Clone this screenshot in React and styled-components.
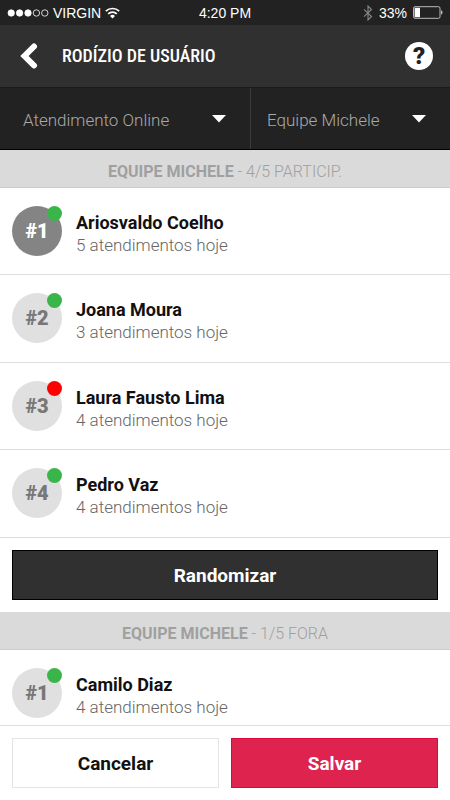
import React, { useState } from 'react';
import styled, { createGlobalStyle } from 'styled-components';


const GlobalStyle = createGlobalStyle`
    * {
        box-sizing: border-box;
    }

    body {
        margin: 0;
        background: #fff;
        font-family: Roboto, "Liberation Sans", sans-serif;
    }

    button, select {
        font-family: inherit;
    }
`;

const Screen = styled.div`
    display: flex;
    flex-direction: column;
    height: 100vh;
`;

const StatusBar = styled.div`
    display: grid;
    grid-template-columns: 1fr auto 1fr;
    align-items: center;
    height: 25px;
    padding: 0 7px;
    background: #222;
    color: #fff;
    font: 14px/24px "Liberation Sans", Arial, sans-serif;
`;

const StatusGroup = styled.div`
    display: flex;
    align-items: center;
    justify-content: ${props => props.$end ? 'flex-end' : 'flex-start'};
    gap: ${props => props.$end ? '6px' : '4px'};
`;

const Header = styled.header`
    display: flex;
    align-items: center;
    gap: 20px;
    height: 63px;
    padding: 0 17px 0 16px;
    background: #303030;
    border-bottom: 1px solid #1a1a1a;
`;

const BackButton = styled.button`
    display: flex;
    padding: 4px;
    border: 0;
    background: none;
`;

const Title = styled.h1`
    flex: 1;
    margin: 0;
    color: #fff;
    font: 500 18px/24px "Roboto Condensed", "Liberation Sans Narrow", "Liberation Sans", sans-serif;
    text-transform: uppercase;
`;

const HelpButton = styled.button`
    width: 28px;
    height: 28px;
    padding: 0;
    border: 0;
    border-radius: 50%;
    background: #fff;
    color: #222;
    font-size: 24px;
    font-weight: 900;
    line-height: 28px;
`;

const Filters = styled.div`
    display: grid;
    grid-template-columns: 5fr 4fr;
    height: 62px;
    background: #222;
    border-bottom: 1px solid #000;
`;

const Filter = styled.label`
    position: relative;
    display: flex;

    & + & {
        border-left: 1px solid #3a3a3a;
    }

    svg {
        position: absolute;
        right: 24px;
        top: 27px;
        pointer-events: none;
    }
`;

const Select = styled.select`
    width: 100%;
    padding: 2px 48px 0 ${props => props.$narrow ? '16px' : '23px'};
    border: 0;
    appearance: none;
    background: none;
    color: #aaa;
    font-size: 17px;
    font-weight: 300;
`;

const Content = styled.main`
    flex: 1;
    min-height: 0;
    overflow-y: auto;
    scrollbar-width: none;
`;

const SectionTitle = styled.h2`
    margin: 0;
    padding: 10px 12px 3px;
    background: #dadada;
    border-bottom: 1px solid #ccc;
    color: #a0a0a0;
    font-size: 16px;
    font-weight: 300;
    line-height: 24px;
    text-align: center;
    text-transform: uppercase;

    strong {
        font-weight: 700;
    }
`;

const UserList = styled.ul`
    margin: 0;
    padding: 0;
    list-style: none;
`;

const UserRow = styled.li`
    display: flex;
    gap: 14px;
    padding: 18px 12px;
    border-bottom: 1px solid #ddd;

    &:nth-child(even) {
        padding-bottom: 19px;
    }
`;

const Position = styled.div`
    position: relative;
    width: 50px;
    height: 50px;
    border-radius: 50%;
    background: ${props => props.$active ? '#848484' : '#e0e0e0'};
    color: ${props => props.$active ? '#fff' : '#777'};
    font-size: 20px;
    font-weight: 900;
    line-height: 50px;
    text-align: center;
`;

const Dot = styled.span`
    position: absolute;
    top: 0;
    right: 0;
    width: 15px;
    height: 15px;
    border-radius: 50%;
    background: ${props => props.$online ? '#39b54a' : '#f00'};
`;

const UserInfo = styled.div`
    align-self: flex-end;
    line-height: 22px;
`;

const Name = styled.div`
    color: #111;
    font-size: 18px;
    font-weight: 700;
`;

const Count = styled.div`
    color: #666;
    font-size: 17px;
    font-weight: 300;
`;

const Button = styled.button`
    flex: 1;
    height: 50px;
    border: 1px solid ${props => props.$border};
    background: ${props => props.$bg};
    color: ${props => props.$color};
    font-size: 19px;
    font-weight: 700;
`;

const Actions = styled.div`
    display: flex;
    gap: 12px;
    padding: 12px;
`;

const Footer = styled.footer`
    display: flex;
    gap: 12px;
    padding: 12px;
    background: #fff;
    border-top: 1px solid #ddd;
`;


const team = [
    { name: 'Ariosvaldo Coelho', count: 5, online: true },
    { name: 'Joana Moura', count: 3, online: true },
    { name: 'Laura Fausto Lima', count: 4, online: false },
    { name: 'Pedro Vaz', count: 4, online: true }
];

const outside = [
    { name: 'Camilo Diaz', count: 4, online: true }
];


const Caret = () => (
    <svg width="14" height="8" viewBox="0 0 14 8"><path d="M0 0h14L7 7.5z" fill="#fff" /></svg>
);

const Signal = () => (
    <svg width="42" height="10" viewBox="0 0 42 10" fill="#fff" stroke="#fff" strokeWidth=".8">
        <circle cx="4.2" cy="5" r="3.2" />
        <circle cx="12.6" cy="5" r="3.2" />
        <circle cx="21" cy="5" r="3.2" />
        <circle cx="29.4" cy="5" r="3.2" fill="none" />
        <circle cx="37.8" cy="5" r="3.2" fill="none" />
    </svg>
);

const Wifi = () => (
    <svg width="15" height="12" viewBox="0 0 15 12" fill="none" stroke="#fff" strokeWidth="1.7">
        <path d="M.8 4.2a9.6 9.6 0 0 1 13.4 0M3.2 6.8a6.1 6.1 0 0 1 8.6 0" />
        <path d="M7.5 11.5L5 9a3.5 3.5 0 0 1 5 0z" fill="#fff" stroke="none" />
    </svg>
);

const Bluetooth = () => (
    <svg width="10" height="16" viewBox="0 0 10 16" fill="none" stroke="#888" strokeWidth="1.1">
        <path d="M1 4.3l7.5 7.2L5 15V1l3.5 3.5L1 11.7" />
    </svg>
);

const Battery = () => (
    <svg width="30" height="13" viewBox="0 0 30 13">
        <rect x=".5" y=".7" width="26.5" height="11.6" rx="1.5" fill="none" stroke="#bbb" />
        <rect x="1.6" y="1.8" width="5.4" height="9.4" fill="#fff" />
        <path d="M28 4.3c2 .6 2 3.8 0 4.4z" fill="#bbb" />
    </svg>
);

const Users = ({ users, highlight }) => (
    <UserList>
        {users.map((user, i) => (
            <UserRow key={user.name}>
                <Position $active={highlight && i === 0}>
                    #{i + 1}
                    <Dot $online={user.online} />
                </Position>
                <UserInfo>
                    <Name>{user.name}</Name>
                    <Count>{user.count} atendimentos hoje</Count>
                </UserInfo>
            </UserRow>
        ))}
    </UserList>
);

export default () => {

    const [users, setUsers] = useState(team);

    const randomize = () => {
        setUsers([...users].sort(() => Math.random() - 0.5));
    }

    return(
        <Screen>
            <GlobalStyle />

            <StatusBar>
                <StatusGroup>
                    <Signal />
                    <span>VIRGIN</span>
                    <Wifi />
                </StatusGroup>
                <span>4:20 PM</span>
                <StatusGroup $end>
                    <Bluetooth />
                    <span>33%</span>
                    <Battery />
                </StatusGroup>
            </StatusBar>

            <Header>
                <BackButton aria-label="Voltar">
                    <svg width="18" height="26" viewBox="0 0 18 26" fill="none" stroke="#fff" strokeWidth="6" strokeLinecap="round">
                        <path d="M14 3.5L4.5 13l9.5 9.5" />
                    </svg>
                </BackButton>
                <Title>Rodízio de Usuário</Title>
                <HelpButton aria-label="Ajuda">?</HelpButton>
            </Header>

            <Filters>
                <Filter>
                    <Select aria-label="Canal">
                        <option>Atendimento Online</option>
                    </Select>
                    <Caret />
                </Filter>
                <Filter>
                    <Select $narrow aria-label="Equipe">
                        <option>Equipe Michele</option>
                    </Select>
                    <Caret />
                </Filter>
            </Filters>

            <Content>
                <SectionTitle><strong>Equipe Michele</strong> - 4/5 particip.</SectionTitle>
                <Users users={users} highlight />

                <Actions>
                    <Button onClick={randomize} $bg="#303030" $border="#000" $color="#fff">Randomizar</Button>
                </Actions>

                <SectionTitle><strong>Equipe Michele</strong> - 1/5 fora</SectionTitle>
                <Users users={outside} />
            </Content>

            <Footer>
                <Button $bg="#fff" $border="#e4e4e4" $color="#111">Cancelar</Button>
                <Button $bg="#de234e" $border="#dc0a3a" $color="#fff">Salvar</Button>
            </Footer>
        </Screen>
    )
}
